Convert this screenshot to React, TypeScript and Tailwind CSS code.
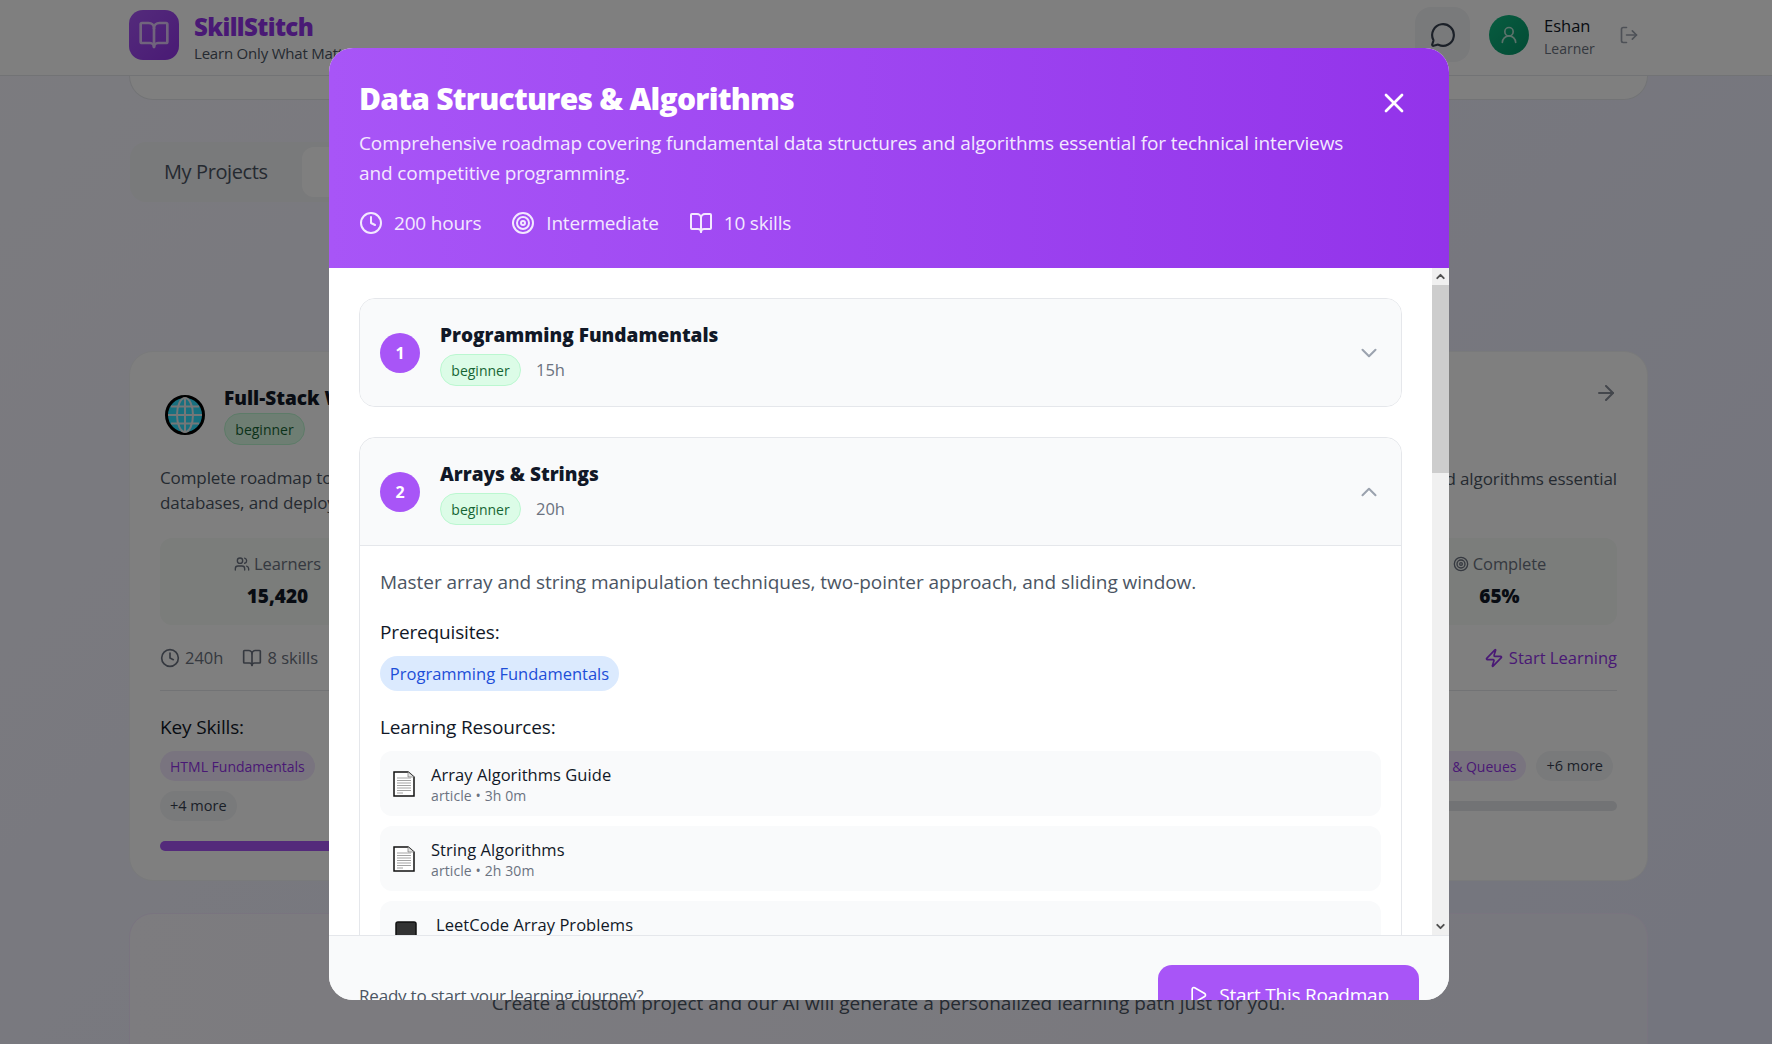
import type { ReactNode } from "react";
import { BookOpen, Clock, Target, X, ChevronDown, ChevronUp, MessageCircle, UserRound, LogOut, Users, ArrowRight, Zap, Play } from "lucide-react";

function DocIcon() {
  return (
    <svg width="22" height="26" viewBox="0 0 22 26" className="ml-[3px] mr-[16px] shrink-0">
      <path d="M1 1h14l6 5v19H1z" fill="#fff" stroke="#111" strokeWidth="1.5" />
      <path d="M15 1v5h6" fill="#e5e5e5" stroke="#777" strokeWidth="0.7" />
      <path d="M4 7h14M4 9.5h14M4 12h14M4 14.5h14M4 17h14M4 19.5h14M4 22h6" stroke="#a3a3a3" strokeWidth="1" />
    </svg>
  );
}

function Monitor() {
  return (
    <svg width="22" height="26" viewBox="0 0 22 26" className="ml-[5px] mr-[19px] shrink-0">
      <rect x="1" y="1" width="20" height="16" rx="2" fill="#333" stroke="#111" strokeWidth="1.5" />
    </svg>
  );
}

function Globe() {
  return (
    <svg width="40" height="40" viewBox="0 0 40 40" className="shrink-0">
      <circle cx="20" cy="20" r="18.5" fill="#30e0ff" stroke="#000" strokeWidth="3" />
      <g fill="none" stroke="#e8eef0" strokeWidth="2">
        <ellipse cx="20" cy="20" rx="8" ry="17" />
        <path d="M20 3v34M3 20h34M6 11.5h28M6 28.5h28" />
      </g>
    </svg>
  );
}

function Resource({ title, meta, third }: { title: string; meta: string; third?: boolean }) {
  return (
    <div className="flex h-[65px] shrink-0 items-center rounded-xl bg-[#f9fafb] px-[10px]">
      {third ? <Monitor /> : <DocIcon />}
      <div className="flex flex-col">
        <span className="text-[16.5px] leading-[24px] tracking-[0.05px] text-[#111827]">{title}</span>
        <span className="text-[14px] leading-[18px] tracking-[0.1px] text-[#6b7280]">{meta}</span>
      </div>
    </div>
  );
}

function Chip({ children, gray }: { children: ReactNode; gray?: boolean }) {
  return (
    <span className={`inline-flex h-[30px] shrink-0 items-center whitespace-nowrap rounded-full px-[10px] ${gray ? "bg-[#f3f4f6] text-[14.5px] text-[#374151]" : "bg-[#f3e8ff] text-[14px] text-[#9333ea]"}`}>
      {children}
    </span>
  );
}

function Level() {
  return (
    <span className="inline-flex h-[32px] w-[81px] shrink-0 items-center justify-center rounded-full border border-[#bbf7d0] bg-[#dcfce7] text-[14px] text-[#166534]">
      beginner
    </span>
  );
}

function StepHead({ n, title, hours, open }: { n: number; title: string; hours: string; open?: boolean }) {
  return (
    <div className="flex h-[107px] items-center bg-[#f9fafb] px-[20px]">
      <div className="flex h-10 w-10 items-center justify-center rounded-full bg-[#a855f7] text-[16px] font-bold text-white">{n}</div>
      <div className="ml-[20px] flex flex-col gap-[6px] pt-[3px]">
        <span className="text-[19px] font-extrabold leading-[26px] text-[#111827]">{title}</span>
        <div className="flex items-center gap-[15px]">
          <Level />
          <span className="text-[16.5px] text-[#6b7280]">{hours}</span>
        </div>
      </div>
      <div className="ml-auto mr-[-1px]">
        {open ? <ChevronUp size={26} strokeWidth={1.9} color="#9ca3af" /> : <ChevronDown size={26} strokeWidth={1.9} color="#9ca3af" />}
      </div>
    </div>
  );
}

function LeftCard() {
  return (
    <div className="flex h-[530px] flex-1 flex-col rounded-[24px] border border-[#f3f4f6] bg-white px-[30px] pt-[30px]">
      <div className="flex gap-[19px] pl-[5px] pt-[13px]">
        <Globe />
        <div className="mt-[-10px] flex flex-col gap-[2px]">
          <span className="text-[19px] font-extrabold leading-[26px] text-[#111827]">Full-Stack Web Development</span>
          <Level />
        </div>
      </div>
      <p className="mt-[20px] text-[17px] leading-[25px] tracking-[-0.1px] text-[#4b5563]">
        Complete roadmap to become a full-stack web developer, covering
        <br />
        databases, and deployment.
      </p>
      <div className="mt-[23px] flex h-[87px] w-[235px] shrink-0 flex-col items-center justify-center gap-[4px] rounded-xl bg-[#f6faf6]">
        <span className="flex items-center gap-1 text-[16.5px] leading-[24px] tracking-[-0.1px] text-[#6b7280]"><Users size={16} />Learners</span>
        <span className="text-[19px] font-extrabold leading-[32px] text-[#111827]">15,420</span>
      </div>
      <div className="mt-[21px] flex h-[45px] shrink-0 items-start gap-[19px] border-b border-[#e5e7eb] text-[16.5px] text-[#6b7280]">
        <span className="flex items-center gap-[5px]"><Clock size={20} />240h</span>
        <span className="flex items-center gap-[5px]"><BookOpen size={20} />8 skills</span>
      </div>
      <h4 className="mt-[22px] text-[19px] leading-[28px] tracking-[-0.15px] text-[#111827]">Key Skills:</h4>
      <div className="mt-[10px] flex gap-[10px]"><Chip>HTML Fundamentals</Chip></div>
      <div className="mt-[10px] flex"><Chip gray>+4 more</Chip></div>
      <div className="mt-[20px] h-[10px] shrink-0 rounded-full bg-[#a855f7]" />
    </div>
  );
}

function RightCard() {
  return (
    <div className="flex h-[530px] flex-1 flex-col items-stretch rounded-[24px] border border-[#f3f4f6] bg-white px-[30px] pt-[30px]">
      <div className="flex h-[65px] shrink-0 justify-end">
        <ArrowRight size={24} color="#6b7280" className="mr-[-1px] mt-[-1px] opacity-80" />
      </div>
      <p className="mt-[19px] h-[51px] whitespace-nowrap text-right text-[17px] leading-[25px] tracking-[-0.1px] text-[#4b5563]">
        fundamental data structures and algorithms essential
      </p>
      <div className="mt-[21px] flex h-[87px] w-[235px] shrink-0 flex-col items-center justify-center gap-[4px] self-end rounded-xl bg-[#f6faf6]">
        <span className="flex items-center gap-1 text-[16.5px] leading-[24px] tracking-[-0.1px] text-[#6b7280]"><Target size={16} />Complete</span>
        <span className="text-[19px] font-extrabold leading-[32px] text-[#111827]">65%</span>
      </div>
      <div className="mt-[21px] flex h-[45px] shrink-0 items-start justify-end border-b border-[#e5e7eb] text-[16.5px] text-[#9333ea]">
        <span className="flex items-center gap-[5px]"><Zap size={20} />Start Learning</span>
      </div>
      <h4 className="mt-[22px] h-[28px] shrink-0" />
      <div className="mr-[4px] mt-[10px] flex justify-end gap-[10px]">
        <Chip>Stacks &amp; Queues</Chip>
        <Chip gray>+6 more</Chip>
      </div>
      <div className="mt-[20px] h-[10px] shrink-0 rounded-full bg-[#e5e7eb]" />
    </div>
  );
}

export default function App() {
  return (
    <div className="relative h-[1044px] w-[1772px] overflow-hidden bg-[linear-gradient(135deg,#f8f7ff,#e8eafc)] font-['Open_Sans','Noto_Sans',sans-serif]">
      <div className="flex h-[76px] items-center border-b border-[#e5e7eb] bg-white pb-[6px] pl-[129px] pr-[133px]">
        <div className="flex h-[50px] w-[50px] items-center justify-center rounded-[14px] bg-gradient-to-br from-[#a855f7] to-[#9333ea]">
          <BookOpen size={32} color="#fff" className="opacity-70" />
        </div>
        <div className="ml-[15px] mt-[6px] flex flex-col">
          <span className="text-[24px] font-extrabold leading-[30px] tracking-[-0.6px] text-[#9333ea]">SkillStitch</span>
          <span className="text-[15px] leading-[22px] tracking-[-0.2px] text-[#4b5563]">Learn Only What Matters</span>
        </div>
        <div className="ml-auto flex items-center">
          <div className="mr-[-1px] flex h-[55px] w-[55px] items-center justify-center rounded-[16px] bg-[#f3f4f6]">
            <MessageCircle size={26} color="#374151" />
          </div>
          <div className="ml-[20px] flex h-10 w-10 items-center justify-center rounded-full bg-gradient-to-br from-[#10b981] to-[#059669]">
            <UserRound size={20} color="#fff" className="opacity-70" />
          </div>
          <div className="ml-[15px] mt-[4px] flex w-[60px] flex-col">
            <span className="text-[16.5px] leading-[24px] text-[#111827]">Eshan</span>
            <span className="mt-[1px] text-[14px] leading-[20px] text-[#6b7280]">Learner</span>
          </div>
          <LogOut size={20} color="#9ca3af" className="ml-[15px]" />
        </div>
      </div>

      <div className="flex flex-col pl-[129px] pr-[124px]">
        <div className="h-[24px] rounded-b-[24px] border border-t-0 border-[#e5e7eb] bg-white" />
        <div className="ml-[1px] mt-[42px] flex h-[60px] w-[500px] items-center gap-[8px] rounded-[16px] bg-[#f3f4f6] pl-[34px]">
          <span className="text-[20px] tracking-[-0.4px] text-[#4b5563]">My Projects</span>
          <span className="ml-[26px] h-[50px] w-[220px] rounded-xl bg-white" />
        </div>
        <div className="mt-[149px] flex gap-[18px]">
          <LeftCard />
          <RightCard />
        </div>
        <div className="mt-[32px] h-[200px] rounded-[24px] border border-[#f3e8ff] bg-[linear-gradient(90deg,#faf8ff,#f0f0fc)] pt-[75px] text-center text-[19px] text-[#4b5563]">
          Create a custom project and our AI will generate a personalized learning path just for you.
        </div>
      </div>

      <div className="absolute inset-0 bg-black/50" />

      <div className="absolute left-[329px] top-[48px] flex h-[952px] w-[1120px] flex-col overflow-hidden rounded-[24px] bg-white">
        <div className="h-[220px] shrink-0 bg-gradient-to-r from-[#a855f7] to-[#9333ea] pl-[30px] pr-[30px] pt-[31px] text-white">
          <div className="flex justify-between">
            <h2 className="text-[30px] font-extrabold leading-[40px] tracking-[-0.75px]">Data Structures &amp; Algorithms</h2>
            <X size={32} className="mr-[9px] mt-[8px]" />
          </div>
          <p className="mt-[9px] w-[1000px] text-[19px] leading-[30px] tracking-[-0.1px] text-[#f3e8ff]">
            Comprehensive roadmap covering fundamental data structures and algorithms essential for technical interviews and competitive programming.
          </p>
          <div className="mt-[21px] flex items-center gap-[30px] text-[19px] tracking-[-0.2px] text-[#f3e8ff]">
            <span className="flex items-center gap-[11px]"><Clock size={24} />200 hours</span>
            <span className="flex items-center gap-[11px]"><Target size={24} />Intermediate</span>
            <span className="flex items-center gap-[11px]"><BookOpen size={24} />10 skills</span>
          </div>
        </div>

        <div className="flex min-h-0 flex-1">
          <div className="flex min-w-0 flex-1 flex-col overflow-hidden px-[30px] pt-[30px]">
            <div className="shrink-0 overflow-hidden rounded-[16px] border border-[#e5e7eb]">
              <StepHead n={1} title="Programming Fundamentals" hours="15h" />
            </div>
            <div className="mt-[30px] flex shrink-0 flex-col rounded-t-[16px] border border-[#e5e7eb]">
              <div className="overflow-hidden rounded-t-[16px] border-b border-[#e5e7eb]">
                <StepHead n={2} title="Arrays & Strings" hours="20h" open />
              </div>
              <div className="flex flex-col px-[20px] pt-[21px]">
                <p className="text-[19px] leading-[30px] tracking-[-0.04px] text-[#4b5563]">Master array and string manipulation techniques, two-pointer approach, and sliding window.</p>
                <h4 className="mt-[20px] text-[19px] leading-[30px] tracking-[-0.15px] text-[#111827]">Prerequisites:</h4>
                <span className="mt-[9px] inline-flex h-[35px] w-[239px] items-center justify-center rounded-full bg-[#dbeafe] pt-[2px] text-[16.5px] text-[#1d4ed8]">Programming Fundamentals</span>
                <h4 className="mt-[21px] text-[19px] leading-[30px] tracking-[-0.15px] text-[#111827]">Learning Resources:</h4>
                <div className="mt-[9px] flex flex-col gap-[10px]">
                  <Resource title="Array Algorithms Guide" meta="article • 3h 0m" />
                  <Resource title="String Algorithms" meta="article • 2h 30m" />
                  <Resource title="LeetCode Array Problems" meta="practice • 5h 0m" third />
                </div>
              </div>
            </div>
          </div>
          <div className="flex w-[17px] shrink-0 flex-col items-center bg-[#f0f0f0]">
            <div className="flex h-[17px] items-center"><ChevronUp size={13} strokeWidth={3.5} color="#505050" /></div>
            <div className="h-[188px] w-full bg-[#cdcdcd]" />
            <div className="mt-auto flex h-[17px] items-center"><ChevronDown size={13} strokeWidth={3.5} color="#505050" /></div>
          </div>
        </div>

        <div className="flex h-[65px] shrink-0 justify-between border-t border-[#e5e7eb] bg-[#f9fafb] pl-[30px] pr-[30px] pt-[29px]">
          <span className="mt-[19px] text-[17px] leading-[24px] tracking-[-0.2px] text-[#4b5563]">Ready to start your learning journey?</span>
          <span className="flex h-[60px] w-[261px] shrink-0 items-center justify-center gap-[11px] rounded-[14px] bg-[#a855f7] text-[19px] tracking-[-0.2px] text-white">
            <Play size={20} />Start This Roadmap
          </span>
        </div>
      </div>
    </div>
  );
}
